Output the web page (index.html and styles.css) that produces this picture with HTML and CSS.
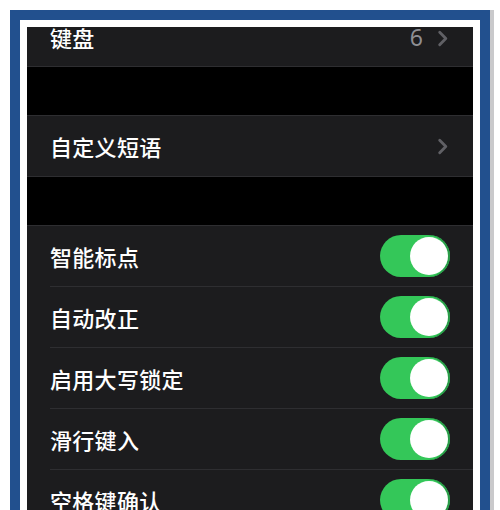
FILE: index.html
```html
<!DOCTYPE html>
<html lang="zh-CN">
<head>
<meta charset="utf-8">
<title>键盘设置</title>
<link rel="stylesheet" href="styles.css">
</head>
<body>
<div class="frame">
  <div class="mat">
    <div class="screen">
      <div class="group">
        <div class="row first">
          <span class="label">键盘</span>
          <span class="detail">6</span>
          <svg class="chev" viewBox="0 0 12 18" width="12" height="17"><path d="M2.5 2.5 L9 9 L2.5 15.5" fill="none" stroke="#606065" stroke-width="3" stroke-linecap="round" stroke-linejoin="round"/></svg>
        </div>
      </div>
      <div class="gap"></div>
      <div class="group">
        <div class="row">
          <span class="label">自定义短语</span>
          <svg class="chev" viewBox="0 0 12 18" width="12" height="17"><path d="M2.5 2.5 L9 9 L2.5 15.5" fill="none" stroke="#606065" stroke-width="3" stroke-linecap="round" stroke-linejoin="round"/></svg>
        </div>
      </div>
      <div class="gap"></div>
      <div class="group inset">
        <div class="row"><span class="label">智能标点</span><span class="toggle"><span class="knob"></span></span></div>
        <div class="row"><span class="label">自动改正</span><span class="toggle"><span class="knob"></span></span></div>
        <div class="row"><span class="label">启用大写锁定</span><span class="toggle"><span class="knob"></span></span></div>
        <div class="row"><span class="label">滑行键入</span><span class="toggle"><span class="knob"></span></span></div>
        <div class="row"><span class="label">空格键确认</span><span class="toggle"><span class="knob"></span></span></div>
      </div>
    </div>
  </div>
</div>
</body>
</html>
```
FILE: styles.css
```css
html, body {
  margin: 0;
  padding: 0;
  background: #ffffff;
  height: 510px;
  overflow: hidden;
}
.frame {
  margin: 10px 0 0 10px;
  width: 460px;
  height: 490px;
  padding: 10px 10px 0 10px;
  background: #22508e;
  box-shadow: 4px 0 0 #c9c9cb;
}
.mat {
  background: #ffffff;
  padding: 7px 7px 0 7px;
  height: 483px;
}
.screen {
  background: #000000;
  height: 483px;
  overflow: hidden;
  font-family: "Noto Sans CJK SC", "Noto Sans", sans-serif;
  color: #ffffff;
}
.group {
  background: #1c1c1e;
  border-top: 1px solid #2e2e31;
  border-bottom: 1px solid #2e2e31;
}
.group:first-child {
  border-top: none;
}
.gap {
  height: 48px;
}
.row {
  height: 60px;
  display: flex;
  align-items: center;
  padding: 0 24px 0 23px;
  font-size: 22px;
  font-weight: 500;
}
.row.first {
  height: 39px;
  align-items: flex-start;
}
.row.first .label,
.row.first .detail {
  margin-top: -2px;
  line-height: 24px;
}
.row.first .chev {
  margin-top: 3px;
}
.label {
  flex: 1;
  letter-spacing: 0.3px;
}
.detail {
  font-family: "Noto Sans", sans-serif;
  font-weight: 400;
  color: #8e8e93;
  font-size: 23px;
  margin-right: 14px;
}
.chev {
  display: block;
}
.inset .row {
  padding-left: 0;
  margin-left: 23px;
  border-top: 1px solid #2e2e31;
}
.inset .row:first-child {
  border-top: none;
}
.toggle {
  width: 70px;
  height: 42px;
  border-radius: 21px;
  background: #34c759;
  display: flex;
  justify-content: flex-end;
  align-items: center;
  padding: 0 2px;
  box-sizing: border-box;
  margin-right: -1px;
  box-shadow: inset -2px 0 0 #2a9a48;
}
.knob {
  width: 38px;
  height: 38px;
  border-radius: 50%;
  background: #ffffff;
}
```
